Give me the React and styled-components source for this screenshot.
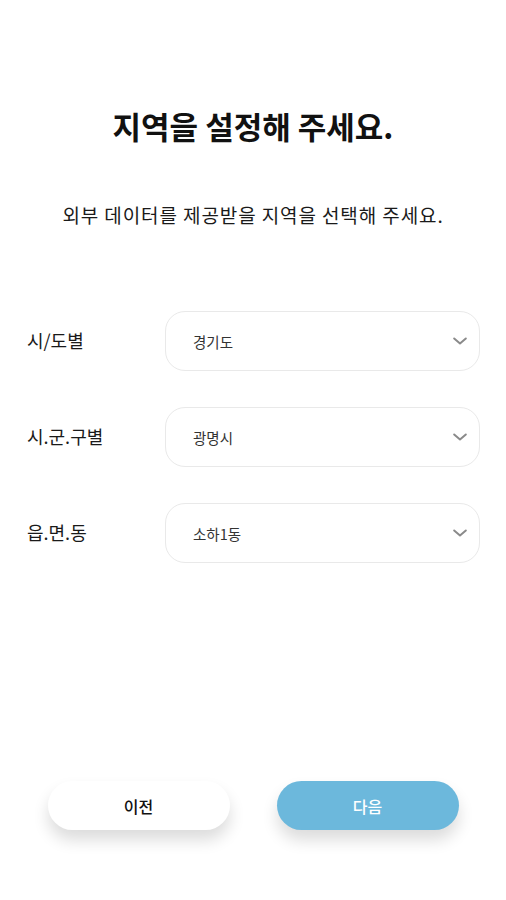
import React from 'react';
import styled, { createGlobalStyle } from 'styled-components';

const GlobalStyle = createGlobalStyle`
  html, body {
    margin: 0;
    padding: 0;
    background: #ffffff;
  }
  body {
    font-family: "Noto Sans CJK KR", "Noto Sans", sans-serif;
    color: #111;
  }
`;

const Page = styled.div`
  width: 506px;
  height: 900px;
  display: flex;
  flex-direction: column;
  align-items: center;
  box-sizing: border-box;
  padding-top: 106px;
`;

const Title = styled.h1`
  margin: 0;
  font-size: 31px;
  font-weight: 700;
  letter-spacing: 0;
  line-height: 40px;
  color: #111;
`;

const Subtitle = styled.p`
  margin: 56px 0 0;
  font-size: 19px;
  font-weight: 400;
  letter-spacing: 0.9px;
  line-height: 26px;
  color: #1a1a1a;
`;

const Form = styled.div`
  width: 100%;
  box-sizing: border-box;
  padding: 0 26px 0 27px;
  margin-top: 83px;
  display: flex;
  flex-direction: column;
  gap: 36px;
`;

const Row = styled.div`
  display: flex;
  align-items: center;
`;

const Label = styled.div`
  width: 138px;
  font-size: 18px;
  color: #1a1a1a;
  margin-top: -3px;
`;

const Select = styled.div`
  flex: 1;
  height: 60px;
  box-sizing: border-box;
  border: 1px solid #e9e9e9;
  border-radius: 20px;
  display: flex;
  align-items: center;
  justify-content: space-between;
  padding: 0 9px 0 27px;
  background: #fff;
`;

const Value = styled.span`
  font-size: 14.5px;
  color: #333;
`;

const Chevron = () => (
  <svg width="20" height="20" viewBox="0 0 24 24" fill="none" stroke="#8a8a8a" strokeWidth="2.4" strokeLinecap="round" strokeLinejoin="round">
    <path d="M5 9l7 6 7-6" />
  </svg>
);

const Buttons = styled.div`
  margin-top: auto;
  margin-bottom: 70px;
  display: flex;
  gap: 47px;
`;

const Button = styled.button`
  width: 182px;
  height: 49px;
  border: none;
  border-radius: 25px;
  font-family: "Noto Sans CJK KR", sans-serif;
  font-size: 16px;
  font-weight: 500;
  background: ${p => (p.primary ? '#6cb8dc' : '#ffffff')};
  color: ${p => (p.primary ? '#ffffff' : '#111')};
  box-shadow: 0 10px 16px rgba(0, 0, 0, 0.14);
`;

const fields = [
  { label: '시/도별', value: '경기도' },
  { label: '시.군.구별', value: '광명시' },
  { label: '읍.면.동', value: '소하1동' },
];

export default function App() {
  return (
    <>
      <GlobalStyle />
      <Page>
        <Title>지역을 설정해 주세요.</Title>
        <Subtitle>외부 데이터를 제공받을 지역을 선택해 주세요.</Subtitle>
        <Form>
          {fields.map(f => (
            <Row key={f.label}>
              <Label>{f.label}</Label>
              <Select>
                <Value>{f.value}</Value>
                <Chevron />
              </Select>
            </Row>
          ))}
        </Form>
        <Buttons>
          <Button>이전</Button>
          <Button primary>다음</Button>
        </Buttons>
      </Page>
    </>
  );
}
